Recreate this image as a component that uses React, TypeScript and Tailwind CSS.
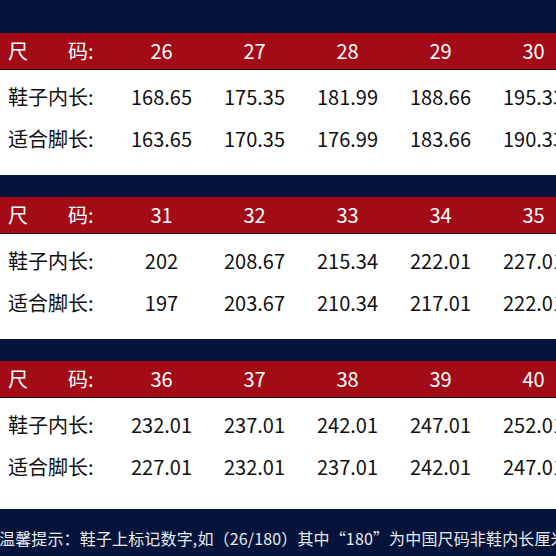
import React from 'react';

type Block = {
  sizes: string[];
  inner: string[];
  foot: string[];
  whiteH: string;
};

const blocks: Block[] = [
  {
    sizes: ['26', '27', '28', '29', '30'],
    inner: ['168.65', '175.35', '181.99', '188.66', '195.33'],
    foot: ['163.65', '170.35', '176.99', '183.66', '190.33'],
    whiteH: 'h-[105px]',
  },
  {
    sizes: ['31', '32', '33', '34', '35'],
    inner: ['202', '208.67', '215.34', '222.01', '227.01'],
    foot: ['197', '203.67', '210.34', '217.01', '222.01'],
    whiteH: 'h-[105px]',
  },
  {
    sizes: ['36', '37', '38', '39', '40'],
    inner: ['232.01', '237.01', '242.01', '247.01', '252.01'],
    foot: ['227.01', '232.01', '237.01', '242.01', '247.01'],
    whiteH: 'h-[111px]',
  },
];

const Cells = ({ values }: { values: string[] }) => (
  <>
    {values.map((v, i) => (
      <div key={i} className="w-[93px] shrink-0 text-center">
        {v}
      </div>
    ))}
  </>
);

const Label = ({ text }: { text: string }) => (
  <div className="w-[115px] shrink-0 pl-[8px]">{text}</div>
);

const SizeTable = ({ block }: { block: Block }) => (
  <div>
    {/* Header */}
    <div className="flex h-[37px] items-center bg-[#a30c17] text-white border-b border-[#1c0b0e]">
      <div className="w-[115px] shrink-0 pl-[8px] flex">
        <div className="w-[80px] flex justify-between">
          <span>尺</span>
          <span>码</span>
        </div>
        <span>:</span>
      </div>
      <Cells values={block.sizes} />
    </div>

    {/* Rows */}
    <div className={`bg-white text-[#111] ${block.whiteH} flex flex-col pt-[6px]`}>
      <div className="flex h-[42px] items-center">
        <Label text="鞋子内长:" />
        <Cells values={block.inner} />
      </div>
      <div className="flex h-[42px] items-center">
        <Label text="适合脚长:" />
        <Cells values={block.foot} />
      </div>
    </div>
  </div>
);

export default function App() {
  return (
    <div
      className="w-[556px] h-[556px] overflow-hidden bg-[#05143a] whitespace-nowrap text-[20px] leading-none"
      style={{ fontFamily: '"Noto Sans CJK SC", "Noto Sans", sans-serif' }}
    >
      <div className="h-[33px]" />
      <SizeTable block={blocks[0]} />
      <div className="h-[22px]" />
      <SizeTable block={blocks[1]} />
      <div className="h-[22px]" />
      <SizeTable block={blocks[2]} />
      <div className="h-[47px] flex items-center pt-[10px] -ml-[1px] text-[16px] tracking-[0.15px] text-[#e8eaf0]">
        温馨提示：鞋子上标记数字,如（26/180）其中“180”为中国尺码非鞋内长厘米，请按脚长选择
      </div>
    </div>
  );
}
